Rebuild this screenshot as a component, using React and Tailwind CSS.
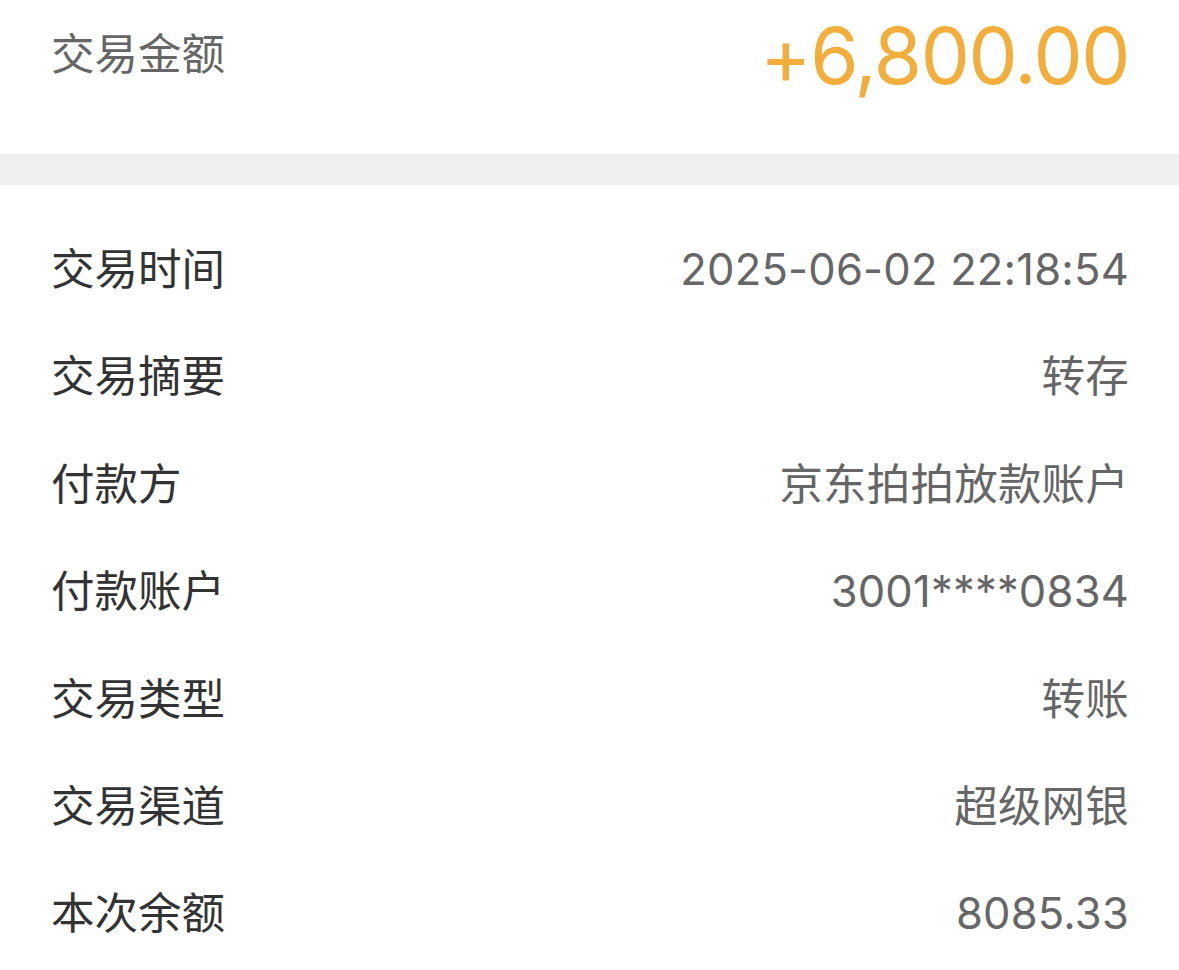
import React from "react";

const rows = [
  { label: "交易时间", value: "2025-06-02 22:18:54" },
  { label: "交易摘要", value: "转存" },
  { label: "付款方", value: "京东拍拍放款账户" },
  { label: "付款账户", value: "3001****0834" },
  { label: "交易类型", value: "转账" },
  { label: "交易渠道", value: "超级网银" },
  { label: "本次余额", value: "8085.33" },
];

export default function App() {
  return (
    <div
      className="w-[1179px] h-[970px] bg-white overflow-hidden"
      style={{ fontFamily: 'Inter, "Noto Sans CJK SC", sans-serif' }}
    >
      {/* amount header */}
      <div className="h-[154px] pl-[51px] pr-[50px]">
        <div className="h-[110px] flex items-center justify-between">
          <span className="text-[43.5px] text-[#666666]">交易金额</span>
          <span className="text-[78px] text-[#f2ad3a] tracking-[-1.4px]">+6,800.00</span>
        </div>
      </div>

      <div className="h-[31px] bg-[#f0f0f0]" />

      {/* detail rows */}
      <div className="pl-[51px] pr-[50px] pt-[31px]">
        {rows.map((r) => (
          <div key={r.label} className="h-[107.4px] flex items-center justify-between">
            <span className="text-[43.5px] text-[#333333]">{r.label}</span>
            <span className="text-[43.5px] text-[#666666] tracking-[0.2px]">{r.value}</span>
          </div>
        ))}
      </div>
    </div>
  );
}
